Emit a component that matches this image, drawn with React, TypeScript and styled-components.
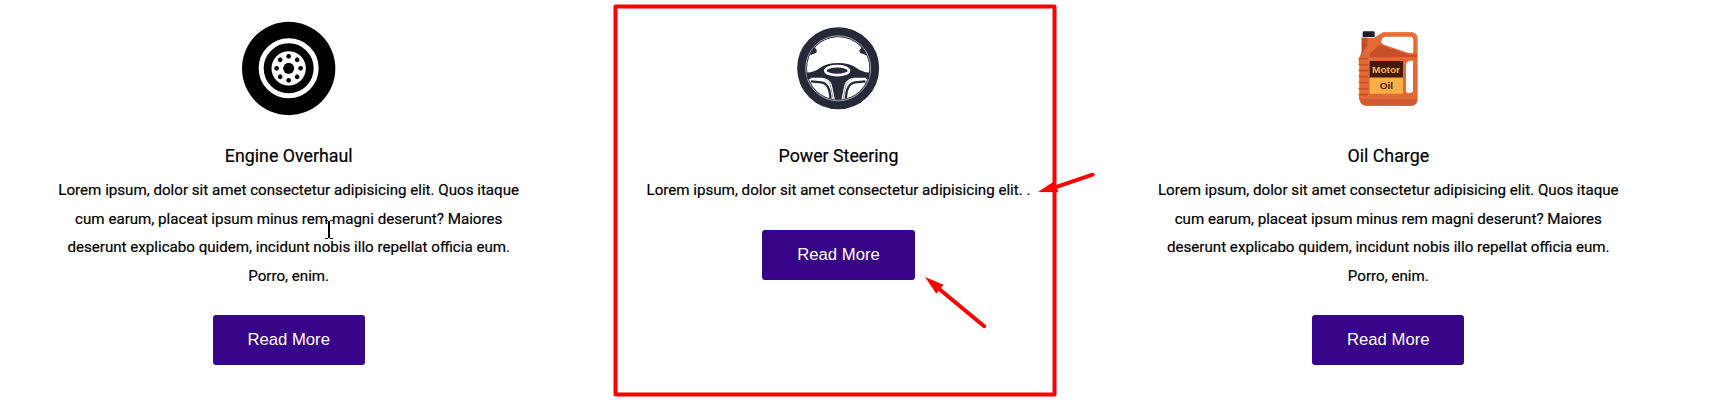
import React from "react";
import styled, { createGlobalStyle } from "styled-components";

const GlobalStyle = createGlobalStyle`
  * { box-sizing: border-box; }
  body { margin: 0; background: #fff; overflow: hidden; }
`;

const Services = styled.section`
  position: relative;
  display: grid;
  grid-template-columns: repeat(3, 549.8px);
  width: 1717px;
  height: 417px;
  padding: 8px 0 0 13.8px;
  font-family: Roboto, sans-serif;
  color: #000;
`;

const Card = styled.article`
  display: flex;
  flex-direction: column;
  align-items: center;
  text-align: center;
`;

const Icon = styled.svg`
  width: 120px;
  height: 120px;
  flex: none;
`;

const Title = styled.h3`
  margin: 14px 0 0;
  font-size: 17.8px;
  font-weight: 400;
  line-height: 28px;
  -webkit-text-stroke: 0.2px #000;
`;

const Description = styled.p`
  width: 475px;
  margin: 6px 0 0;
  font-size: 15.14px;
  font-weight: 400;
  line-height: 28.6px;
  -webkit-text-stroke: 0.2px #000;
`;

const Button = styled.button`
  width: 152.3px;
  height: 50px;
  margin-top: 25px;
  padding: 0;
  border: 0;
  border-radius: 3px;
  background: #370587;
  color: #fff;
  font: 16.7px "Liberation Sans", Arial, sans-serif;
`;

const Annotations = styled.svg`
  position: absolute;
  top: 0;
  left: 0;
  pointer-events: none;
`;

const HOLES = [0, 45, 90, 135, 180, 225, 270, 315];

const TireIcon = () => (
  <Icon viewBox="26.5 24 360 360">
    <circle cx="205.5" cy="205.5" r="140" />
    <circle cx="205.5" cy="205" r="82.5" fill="none" stroke="#fff" strokeWidth="15" />
    <circle cx="205.5" cy="205" r="51.5" fill="#fff" />
    <circle cx="205.5" cy="205" r="16.5" />
    {HOLES.map((a) => (
      <circle key={a} cx="205.5" cy="169" r="7" transform={`rotate(${a} 205.5 205)`} />
    ))}
  </Icon>
);

const SteeringIcon = () => (
  <Icon viewBox="-4.5 -6 360 360">
    <circle cx="176" cy="175" r="109" fill="none" stroke="#272838" strokeWidth="28" />
    <circle cx="176" cy="175" r="95" fill="none" stroke="#272838" strokeWidth="3" />
    <circle cx="176" cy="175" r="97.5" fill="none" stroke="#e8e8ec" strokeWidth="2" />
    <g fill="#272838">
      <path d="M94 127 L104 110 L112 121 Q113 130 103 131 L92 136Z" />
      <path d="M258 127 L248 110 L240 121 Q239 130 249 131 L260 136Z" />
      <path d="M81 187 Q99 189 121 174 Q141 159 176 159 Q211 159 231 174 Q253 189 271 187 L268 207 L220 206 Q202 212 199 229 L191 269 H161 L153 229 Q150 212 132 206 L84 207Z" />
      <path d="M94 214 L125 217 Q151 220 153 266" fill="none" stroke="#272838" strokeWidth="7" />
      <path d="M258 214 L227 217 Q201 220 199 266" fill="none" stroke="#272838" strokeWidth="7" />
    </g>
    <path d="M93 205 H127 Q148 207 155 224 L164 268" fill="none" stroke="#fff" strokeWidth="4" />
    <path d="M259 205 H225 Q204 207 197 224 L188 268" fill="none" stroke="#fff" strokeWidth="4" />
    <ellipse cx="173" cy="182" rx="35.5" ry="13.5" fill="#272838" stroke="#fff" strokeWidth="8" />
  </Icon>
);

const OilIcon = () => (
  <Icon viewBox="-35 -36 360 360">
    <path
      fillRule="evenodd"
      fill="#e26a36"
      d="M66 53 H104 L121 42 Q128 37 137 37 H214 Q234 37 234 57 V238 Q234 257 214 257 H80 Q63 257 59 239 L57 233 L60 224 L58 217 L60 207 L58 199 L60 188 L58 181 L60 171 L58 163 L60 154 L58 145 L60 136 L57 127 V117 L66 99Z M136 50 Q124 55 125 66 Q126 72 135 75 L207 99 Q221 103 221 92 V61 Q221 50 211 50Z M211 122 Q199 124 199 137 V209 Q199 219 207 219 H210 Q220 219 220 210 V122Z"
    />
    <path d="M66 53 H83 V79 L61 111 L58 118 L66 96Z" fill="#c64d29" />
    <path d="M114 78 Q119 74 128 77 L202 101 Q214 106 232 101 V112 H94 Q86 108 91 101Z" fill="#c94f2a" />
    <path d="M123 44 L130 39 H216 Q229 41 231 57 V99" fill="none" stroke="#ed7b43" strokeWidth="4" />
    <path d="M61 237 H232 Q232 257 214 257 H80 Q65 256 61 237Z" fill="#d35b31" />
    <path d="M59 116 H83 M59 134 H83 M59 152 H83 M59 170 H83 M59 188 H83 M59 206 H83 M59 224 H83" stroke="#c54f29" strokeWidth="5" strokeLinecap="round" />
    <path d="M69 51 V38 Q69 34 73 34 H101 Q105 34 105 38 V51Z" fill="#17202a" />
    <rect x="90" y="123" width="100" height="50" fill="#431a06" />
    <rect x="90" y="173" width="100" height="48" fill="#fbb047" />
    <text x="139" y="158" textAnchor="middle" textLength="84" lengthAdjust="spacingAndGlyphs" fontFamily="Liberation Sans, sans-serif" fontWeight="700" fontSize="29" fill="#fbb047">Motor</text>
    <text x="140" y="206" textAnchor="middle" textLength="40" lengthAdjust="spacingAndGlyphs" fontFamily="Liberation Sans, sans-serif" fontWeight="700" fontSize="29" fill="#431a06">Oil</text>
  </Icon>
);

const LONG_TEXT =
  "Lorem ipsum, dolor sit amet consectetur adipisicing elit. Quos itaque cum earum, placeat ipsum minus rem magni deserunt? Maiores deserunt explicabo quidem, incidunt nobis illo repellat officia eum. Porro, enim.";

const SERVICES = [
  { title: "Engine Overhaul", text: LONG_TEXT, Art: TireIcon },
  { title: "Power Steering", text: "Lorem ipsum, dolor sit amet consectetur adipisicing elit. .", Art: SteeringIcon },
  { title: "Oil Charge", text: LONG_TEXT, Art: OilIcon },
];

export default function App() {
  return (
    <>
      <GlobalStyle />
      <Services>
        {SERVICES.map(({ title, text, Art }) => (
          <Card key={title}>
            <Art />
            <Title>{title}</Title>
            <Description>{text}</Description>
            <Button>Read More</Button>
          </Card>
        ))}
        <Annotations width="1717" height="417" viewBox="0 0 1717 417">
          <g fill="none" stroke="#f00" strokeWidth="4" strokeLinecap="round" strokeLinejoin="round">
            <rect x="615.5" y="6.5" width="439" height="388" />
            <path d="M1055 187.3 L1092.5 174.7 M938 288 L984.2 326.2" />
          </g>
          <path d="M1038 192 L1055 180.7 L1058.3 192.3Z M925 277 L943.5 284.7 L936.3 293.7Z" fill="#f00" />
          <path d="M325 220.5 H328 M330 220.5 H333 M325 238.5 H328 M330 238.5 H333" fill="none" stroke="#000" />
          <path d="M329 221 V238" stroke="#000" strokeWidth="2" />
        </Annotations>
      </Services>
    </>
  );
}
